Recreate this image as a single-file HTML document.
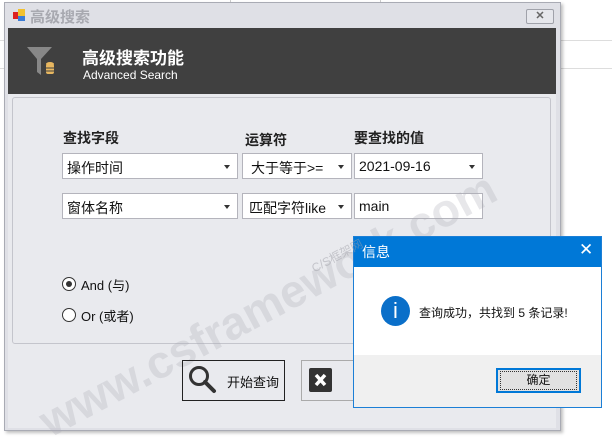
<!DOCTYPE html>
<html><head><meta charset="utf-8"><style>
*{margin:0;padding:0;box-sizing:border-box}
body{width:612px;height:444px;position:relative;overflow:hidden;background:#fff;font-family:"Liberation Sans","Noto Sans CJK SC",sans-serif;font-size:13px;color:#111}
.a{position:absolute}
.combo{position:absolute;background:#fff;border:1px solid #b4b4bc;height:26px;padding:4px 0 0 4px;font-size:14px}
.combo .ar{position:absolute;right:7px;top:11px;width:0;height:0;border-left:3.5px solid transparent;border-right:3.5px solid transparent;border-top:4px solid #333}
.lbl{position:absolute;font-weight:bold;font-size:14px;color:#222}
</style></head><body>
<div class="a" style="left:0;top:40px;width:612px;height:1px;background:#ddd"></div>
<div class="a" style="left:0;top:68px;width:612px;height:1px;background:#ddd"></div>
<div class="a" style="left:230px;top:0;width:1px;height:8px;background:#ccc"></div>
<div class="a" style="left:380px;top:0;width:1px;height:8px;background:#ccc"></div>
<!-- window -->
<div class="a" style="left:4px;top:2px;width:557px;height:429px;background:#dfe0e6;border:1px solid #a9abb4;box-shadow:2px 2px 3px rgba(0,0,0,.25)"></div>
<div class="a" style="left:13px;top:12px;width:5px;height:7px;background:#d22"></div>
<div class="a" style="left:18px;top:9px;width:7px;height:7px;background:#f2c12e"></div>
<div class="a" style="left:18px;top:16px;width:7px;height:5px;background:#3a7bd5"></div>
<div class="a" style="left:30px;top:6px;font-size:15px;font-weight:bold;color:#a8a9b0">高级搜索</div>
<div class="a" style="left:526px;top:9px;width:28px;height:15px;border:1px solid #a0a2aa;border-radius:2px;background:#e6e7ec;font-size:11px;text-align:center;line-height:13px;color:#666;font-weight:bold">✕</div>
<div class="a" style="left:8px;top:28px;width:548px;height:66px;background:#404040"></div>
<svg class="a" style="left:26px;top:46px" width="30" height="30"><path d="M1 1 H26 L15 13 V29 L11 26 V13 Z" fill="#888"/><ellipse cx="24" cy="18" rx="4" ry="2" fill="#e8b760"/><rect x="20" y="18" width="8" height="10" rx="2" fill="#e8b760"/><path d="M20 22 h8 M20 25 h8" stroke="#404040"/></svg>
<div class="a" style="left:82px;top:44px;font-size:17px;font-weight:bold;color:#fff">高级搜索功能</div>
<div class="a" style="left:83px;top:68px;font-size:12px;color:#fff">Advanced Search</div>
<div class="a" style="left:8px;top:94px;width:548px;height:334px;background:#e9eaee"></div>
<div class="a" style="left:12px;top:97px;width:539px;height:247px;border:1px solid #c4c5cc;border-radius:3px"></div>
<div class="lbl" style="left:63px;top:128px">查找字段</div>
<div class="lbl" style="left:245px;top:130px">运算符</div>
<div class="lbl" style="left:354px;top:128px">要查找的值</div>
<div class="combo" style="left:62px;top:153px;width:176px">操作时间<span class="ar"></span></div>
<div class="combo" style="left:242px;top:153px;width:110px;padding-left:8px">大于等于&gt;=<span class="ar"></span></div>
<div class="combo" style="left:354px;top:153px;width:129px">2021-09-16<span class="ar"></span></div>
<div class="combo" style="left:62px;top:193px;width:176px">窗体名称<span class="ar"></span></div>
<div class="combo" style="left:242px;top:193px;width:110px;padding-left:6px">匹配字符like<span class="ar"></span></div>
<div class="combo" style="left:354px;top:193px;width:129px">main</div>
<div class="a" style="left:62px;top:277px;width:14px;height:14px;border:1px solid #333;border-radius:50%;background:#fff"></div>
<div class="a" style="left:66px;top:281px;width:6px;height:6px;border-radius:50%;background:#333"></div>
<div class="a" style="left:81px;top:275px;font-size:13px">And (与)</div>
<div class="a" style="left:62px;top:308px;width:14px;height:14px;border:1px solid #333;border-radius:50%;background:#fff"></div>
<div class="a" style="left:81px;top:306px;font-size:13px">Or (或者)</div>
<div class="a" style="transform:rotate(-28deg);transform-origin:0 0;font-size:46px;font-weight:bold;color:rgba(170,170,178,.28);white-space:nowrap;left:30px;top:400px">www.csframework.com</div>
<div class="a" style="left:182px;top:360px;width:103px;height:41px;border:1px solid #222"></div>
<svg class="a" style="left:188px;top:365px" width="30" height="30"><circle cx="11" cy="11" r="8.5" fill="none" stroke="#333" stroke-width="3"/><path d="M17 17 L26 26" stroke="#333" stroke-width="4" stroke-linecap="round"/></svg>
<div class="a" style="left:227px;top:372px;font-size:13px">开始查询</div>
<div class="a" style="left:301px;top:360px;width:60px;height:41px;border:1px solid #aaa"></div>
<svg class="a" style="left:309px;top:368px" width="24" height="25"><rect width="23" height="24" rx="2" fill="#333"/><path d="M7 7 L16 17 M16 7 L7 17" stroke="#fff" stroke-width="3.5"/></svg>
<!-- dialog -->
<div class="a" style="left:353px;top:236px;width:249px;height:172px;background:#f0f0f0;border:1px solid #1c7fd6"></div>
<div class="a" style="left:354px;top:237px;width:247px;height:30px;background:#0078d7"></div>
<div class="a" style="left:309px;top:247px;font-size:12px;color:rgba(160,160,168,.5);transform:rotate(-28deg)">C/S框架网</div>
<div class="a" style="left:362px;top:242px;font-size:14px;color:#fff">信息</div>
<div class="a" style="left:579px;top:240px;font-size:17px;color:#fff">✕</div>
<div class="a" style="left:354px;top:267px;width:247px;height:88px;background:#fff"></div>
<div class="a" style="left:381px;top:296px;width:29px;height:30px;border-radius:50%;background:#0a6fc9;color:#fff;text-align:center;font-size:22px;line-height:30px">i</div>
<div class="a" style="left:419px;top:304px;font-size:12px">查询成功，共找到 5 条记录!</div>
<div class="a" style="left:496px;top:368px;width:85px;height:25px;border:2px solid #0078d7;background:#e1e1e1;text-align:center;font-size:12px;line-height:20px"><span style="outline:1px dotted #333;display:inline-block;width:75px;line-height:17px;margin-top:1px">确定</span></div>
</body></html>
